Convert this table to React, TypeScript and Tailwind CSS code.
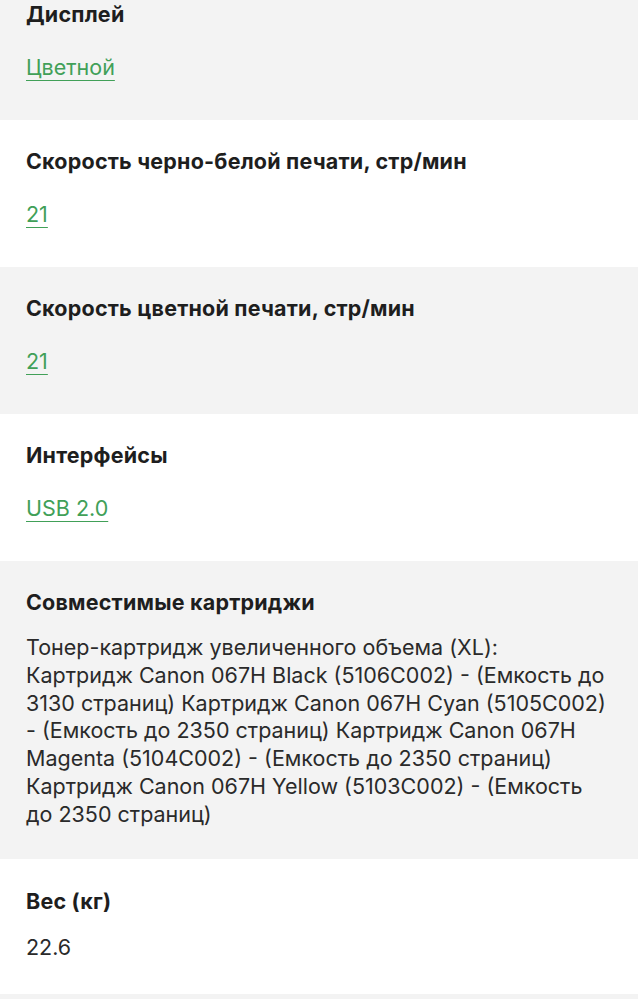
import React from "react";

const font = { fontFamily: "Inter, 'Noto Sans', sans-serif" };

function LinkRow({ title, value, gray, first }: { title: string; value: string; gray?: boolean; first?: boolean }) {
  return (
    <div className={`${gray ? "bg-[#f3f3f3]" : "bg-white"} px-[26px] ${first ? "pt-0 pb-[39px]" : "pt-[27px] pb-[39px]"}`}>
      <div className="text-[21.5px] leading-[28px] font-bold tracking-[0.2px] text-[#1e1e1e]">{title}</div>
      <div className="mt-[25px] text-[21.5px] leading-[28px]">
        <a href="#" className="text-[#41a058] underline underline-offset-[5px] decoration-1">{value}</a>
      </div>
    </div>
  );
}

const lines = [
  "Тонер-картридж увеличенного объема (XL):",
  "Картридж Canon 067H Black (5106C002) - (Емкость до",
  "3130 страниц) Картридж Canon 067H Cyan (5105C002)",
  "- (Емкость до 2350 страниц) Картридж Canon 067H",
  "Magenta (5104C002) - (Емкость до 2350 страниц)",
  "Картридж Canon 067H Yellow (5103C002) - (Емкость",
  "до 2350 страниц)",
];

export default function App() {
  return (
    <div className="w-[638px] min-h-[999px] bg-[#f3f3f3]" style={font}>
      <LinkRow title="Дисплей" value="Цветной" gray first />
      <LinkRow title="Скорость черно-белой печати, стр/мин" value="21" />
      <LinkRow title="Скорость цветной печати, стр/мин" value="21" gray />
      <LinkRow title="Интерфейсы" value="USB 2.0" />
      <div className="bg-[#f3f3f3] px-[26px] pt-[27px] pb-[30px]">
        <div className="text-[21.5px] leading-[28px] font-bold tracking-[0.2px] text-[#1e1e1e]">Совместимые картриджи</div>
        <div className="mt-[18px] text-[21.5px] leading-[27.8px] text-[#2a2a2a]">
          {lines.map((l, i) => (
            <div key={i} className="whitespace-nowrap">{l}</div>
          ))}
        </div>
      </div>
      <div className="bg-white px-[26px] pt-[28px] pb-[33px]">
        <div className="text-[21.5px] leading-[28px] font-bold tracking-[0.2px] text-[#1e1e1e]">Вес (кг)</div>
        <div className="mt-[18px] text-[21.5px] leading-[28px] text-[#2a2a2a]">22.6</div>
      </div>
    </div>
  );
}
